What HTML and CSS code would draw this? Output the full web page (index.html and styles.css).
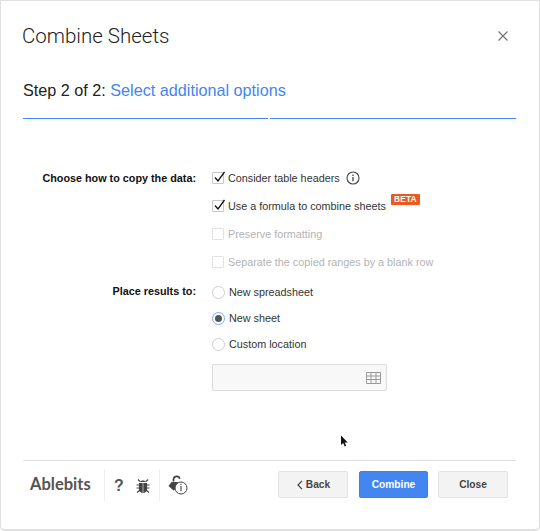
FILE: index.html
```html
<!DOCTYPE html>
<html lang="en">
<head>
<meta charset="utf-8">
<title>Combine Sheets</title>
<link rel="stylesheet" href="styles.css">
</head>
<body>
<div class="dialog">
  <header class="head">
    <h1 class="title">Combine Sheets</h1>
    <svg class="close-x" width="10" height="10" viewBox="0 0 10 10"><path d="M.5.500l9 9M9.500.500l-9 9" stroke="#757575" stroke-width="1.200" fill="none"/></svg>
  </header>
  <div class="step">Step 2 of 2: <span class="step-name">Select additional options</span></div>
  <div class="progress"><i></i><i></i></div>
  <main class="form">
    <div class="label first">Choose how to copy the data:</div>
    <div class="options">
      <div class="opt">
        <span class="check on"><svg width="13" height="13" viewBox="0 0 13 13"><path d="M2 6.500l3 3.500 6.500-9" stroke="#111" stroke-width="1.300" fill="none"/></svg></span>
        <span>Consider table headers</span>
        <svg class="info" width="14" height="14" viewBox="0 0 14 14"><circle cx="7" cy="7" r="6" fill="none" stroke="#444" stroke-width="1.100"/><path d="M7 6v4.200" stroke="#444" stroke-width="1.300"/><path d="M7 3.600v1.300" stroke="#444" stroke-width="1.300"/></svg>
      </div>
      <div class="opt">
        <span class="check on"><svg width="13" height="13" viewBox="0 0 13 13"><path d="M2 6.500l3 3.500 6.500-9" stroke="#111" stroke-width="1.300" fill="none"/></svg></span>
        <span>Use a formula to combine sheets</span>
        <span class="beta">BETA</span>
      </div>
      <div class="opt off"><span class="check"></span><span>Preserve formatting</span></div>
      <div class="opt off"><span class="check"></span><span>Separate the copied ranges by a blank row</span></div>
    </div>
    <div class="label second">Place results to:</div>
    <div class="options radios">
      <div class="opt"><span class="radio"></span><span>New spreadsheet</span></div>
      <div class="opt"><span class="radio sel"></span><span>New sheet</span></div>
      <div class="opt"><span class="radio"></span><span>Custom location</span></div>
      <div class="range">
        <svg width="15" height="12" viewBox="0 0 15 12"><path d="M.5.500h14v11H.5zM.5 4h14M.5 7.500h14M5 .5v11M10 .5v11" fill="none" stroke="#999"/></svg>
      </div>
    </div>
  </main>
  <footer class="foot">
    <div class="logo">Ablebits</div>
    <div class="tools">
      <span class="help">?</span>
      <svg class="bug" width="16" height="16" viewBox="0 0 16 16"><path d="M5 4C5.500 2 10.500 2 11 4z M4 5h8v6.500C12 13.500 10 15 8 15s-4-1.500-4-3.500z" fill="#444"/><path d="M4.500 7H1.500M11.500 7h3M4.500 10H1.500M11.500 10h3M5 12l-3 2.500M11 12l3 2.500M5 3.500L3 1.500M11 3.500l2-2" stroke="#444" stroke-width="1.100" fill="none"/><path d="M8 5v10" stroke="#fff" stroke-width=".6"/></svg>
    </div>
    <div class="key">
      <svg width="24" height="22" viewBox="0 0 24 22"><path d="M8.500 7.500V5.500a3.200 3.200 0 0 1 6.300-.8" fill="none" stroke="#444" stroke-width="1.700"/><path d="M6.500 8h6l1.500 2-3 2 0 3-2.500 1.500-5-4.500z" fill="#444"/><circle cx="16" cy="14" r="6" fill="#fff" stroke="#444" stroke-width="1"/><path d="M16 12v5.200M16 9.800v1.200" stroke="#444" stroke-width="1.100"/></svg>
    </div>
    <div class="buttons">
      <button class="btn"><svg class="chev" width="6" height="10" viewBox="0 0 6 10"><path d="M5 .8L1 5l4 4.200" fill="none" stroke="#444" stroke-width="1.200"/></svg>Back</button>
      <button class="btn primary">Combine</button>
      <button class="btn">Close</button>
    </div>
  </footer>
  <svg class="cursor" width="9" height="13" viewBox="0 0 9 13"><path d="M1 .5v9.500l2.200-2 1.500 3.500 1.500-.7-1.500-3.300h3z" fill="#111"/></svg>
</div>
</body>
</html>
```

FILE: styles.css
```css
* { box-sizing: border-box; }
html, body { margin: 0; height: 100%; background: #fff; }
body { font-family: "Liberation Sans", Arial, sans-serif; color: #333; overflow: hidden; }
.dialog {
  position: relative;
  width: 540px;
  height: 531px;
  background: #fff;
  border: 1px solid #e0e0e0;
  border-bottom-width: 2px;
  border-radius: 0 0 5px 5px;
  padding: 0 23px 0 21px;
  display: flex;
  flex-direction: column;
}
.head { display: flex; justify-content: space-between; align-items: center; height: 28px; margin-top: 21px; }
.title { margin: 0; font: 300 20.500px/28px Roboto, sans-serif; color: #222; }
.close-x { margin-right: 8px; }
.step { margin: 30px 0 0 1px; font-size: 16.200px; line-height: 20px; color: #222; }
.step-name { color: #4285f4; }
.progress { display: flex; gap: 2px; margin: 18px 0 0 1px; width: 493px; }
.progress i { flex: 1; border-top: 1px solid #4285f4; }
.progress i:first-child { flex: 0 0 245px; }
.form { display: grid; grid-template-columns: 174px 1fr; column-gap: 16px; margin-top: 52px; font-size: 10.800px; }
.label { font-weight: 700; color: #111; text-align: right; line-height: 14px; white-space: nowrap; }
.second { margin-top: 15px; }
.options { display: flex; flex-direction: column; gap: 14px; }
.radios { margin-top: 16px; gap: 12px; }
.opt { display: flex; align-items: center; height: 14px; color: #333; gap: 4px; position: relative; }
.off { color: #b3b3b3; }
.check { width: 12px; height: 12px; border: 1px solid #c8c8c8; border-radius: 1px; position: relative; flex: none; }
.off .check { border-color: #e2e2e2; }
.check svg { position: absolute; left: 0; top: -2px; }
.radio { width: 13px; height: 13px; border: 1px solid #cfcfcf; border-radius: 50%; flex: none; position: relative; }
.radio.sel { border-color: #7baaf7; }
.radio.sel::after { content: ""; position: absolute; inset: 2px; border-radius: 50%; background: #555; }
.info { margin-left: 2px; }
.beta { position: absolute; left: 179px; top: -5px; background: #ea5a1e; color: #fff; font-size: 8.300px; font-weight: 700; line-height: 11px; padding: 0 3px; border-radius: 1px; letter-spacing: .2px; height: 11px; }
.range { width: 175px; height: 27px; margin-top: 1px; background: #f8f8f8; border: 1px solid #dcdcdc; border-radius: 2px; display: flex; align-items: center; justify-content: flex-end; padding-right: 5px; }
.foot { position: absolute; left: 22px; right: 23px; top: 459px; border-top: 1px solid #e0e0e0; height: 50px; display: flex; align-items: flex-start; }
.logo { margin: 13px 0 0 7px; font: 700 16.500px/20px Lato, sans-serif; color: #555; width: 74px; }
.tools { border-left: 1px solid #eee; margin-top: 8px; height: 32px; width: 55px; padding-left: 9px; display: flex; align-items: center; gap: 10px; }
.help { font: 700 16px/20px "Liberation Sans", sans-serif; color: #555; margin-top: 1px; }
.bug { margin-top: 1px; margin-left: 1px; }
.key { border-left: 1px solid #eee; margin-top: 8px; height: 32px; padding: 5px 0 0 5px; }
.buttons { margin-left: auto; margin-right: 8px; margin-top: 10px; display: flex; gap: 10px; }
.btn { width: 70px; height: 27px; padding: 0; border: 1px solid #e3e3e3; border-radius: 2px; background: #f3f3f3; color: #444; font: 700 10.200px/14px "Liberation Sans", sans-serif; display: flex; align-items: center; justify-content: center; gap: 3px; }
.chev { margin-left: 1px; }
.primary { width: 69px; margin-left: 1px; background: #4486f1; border-color: #3f7fe8; color: #fff; }
.cursor { position: absolute; left: 339px; top: 434px; }
```
